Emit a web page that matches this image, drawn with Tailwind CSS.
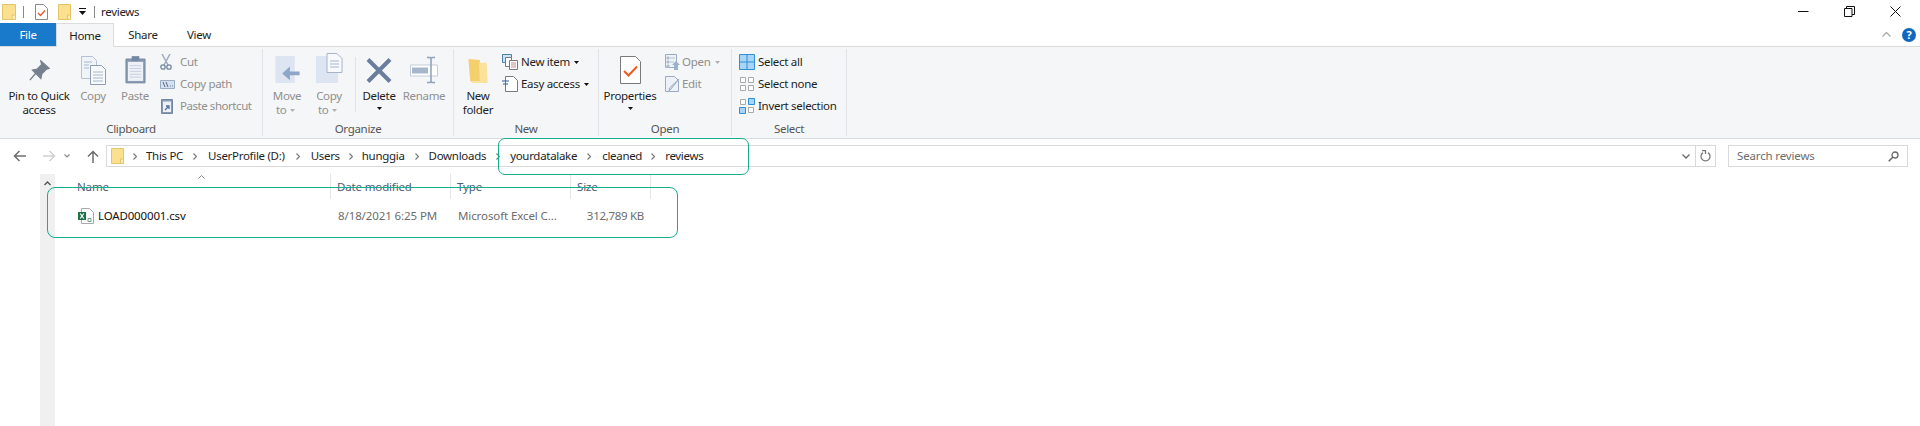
<!DOCTYPE html>
<html lang="en">
<head>
  <meta charset="UTF-8">
  <title>reviews</title>
  <script src="https://cdn.jsdelivr.net/npm/@tailwindcss/browser@4"></script>
</head>
<body class="bg-white">
<div class="relative w-[1920px] h-[426px] overflow-hidden bg-white text-[11.5px] leading-[16px] text-[#1e1e1e] font-['Noto_Sans',sans-serif] tracking-[-0.3px]">

  <!-- title bar -->
  <div class="flex items-center h-[23px]">
    <svg class="ml-[2px] w-[14px] h-[16px]" viewBox="0 0 14 16"><path d="M.5.500h13v15H.5z" fill="#fbe08f" stroke="#e3c468"/><path d="M10 11h3.500v4.500H10z" fill="#fdeeb8" stroke="#e3c468"/></svg>
    <div class="ml-[7px] w-px h-[12px] bg-[#8a8a8a]"></div>
    <svg class="ml-[11px] w-[13px] h-[16px]" viewBox="0 0 13 16"><path d="M.5.500h8l4 4v11H.5z" fill="#fff" stroke="#8a8a8a"/><path d="M3 9l2.500 2.500L10 6.500" fill="none" stroke="#e8562a" stroke-width="1.300"/></svg>
    <svg class="ml-[10px] w-[13px] h-[16px]" viewBox="0 0 13 16"><path d="M.5.500h12v15H.5z" fill="#fbe08f" stroke="#e3c468"/><path d="M9.500 11h3v4.500h-3z" fill="#fdeeb8" stroke="#e3c468"/></svg>
    <svg class="ml-[8px] w-[7px] h-[8px]" viewBox="0 0 7 8"><path d="M0 0h7v1H0zM0 3h7L3.500 7z" fill="#111"/></svg>
    <div class="ml-[8px] w-px h-[12px] bg-[#8a8a8a]"></div>
    <span class="ml-[6px]">reviews</span>
    <div class="ml-auto flex items-center mr-[19px] gap-[35px]">
      <svg class="w-[11px] h-[11px]" viewBox="0 0 11 11"><path d="M0 5.500h10.500" stroke="#111"/></svg>
      <svg class="w-[11px] h-[11px]" viewBox="0 0 11 11"><path d="M.5 2.500h7.500v8H.5zM2.500 2.500v-2h8v8H8" fill="none" stroke="#111"/></svg>
      <svg class="w-[11px] h-[11px]" viewBox="0 0 11 11"><path d="M.5.500l10 10M10.500.500l-10 10" stroke="#111"/></svg>
    </div>
  </div>

  <!-- tabs -->
  <div class="relative flex items-end h-[24px] border-b border-[#dadbdc]">
    <div class="w-[56px] h-[23px] bg-[#1979ca] text-white flex items-center justify-center">File</div>
    <div class="w-[58px] h-[24px] -mb-px bg-[#f5f6f7] border border-b-0 border-[#dadbdc] flex items-center justify-center">Home</div>
    <div class="w-[58px] h-[23px] flex items-center justify-center">Share</div>
    <div class="w-[54px] h-[23px] flex items-center justify-center">View</div>
    <div class="ml-auto flex items-center h-[23px] mr-[4px] gap-[11px]">
      <svg class="w-[9px] h-[5px]" viewBox="0 0 9 5"><path d="M.5 4.500l4-4 4 4" fill="none" stroke="#a8a8a8" stroke-width="1.200"/></svg>
      <div class="w-[14px] h-[14px] rounded-full bg-[#1167bd] text-white text-[11px] leading-[14px] font-bold text-center tracking-normal">?</div>
    </div>
  </div>

  <!-- ribbon -->
  <div class="flex h-[92px] bg-[#f5f6f7] border-b border-[#dadbdc] pt-[2px]">

    <!-- clipboard -->
    <div class="w-[263px] h-[87px] border-r border-[#e1e3e6] flex flex-col">
      <div class="flex h-[69px] leading-[14px]">
        <div class="w-[78px] flex flex-col items-center">
          <svg class="mt-[11px] w-[22px] h-[22px]" viewBox="0 0 24 24"><path d="M14 1l9 8-3 1-5 5-1 5-9-9 5-1 5-5zM8 15l-6 7" fill="#77808f" stroke="#77808f" stroke-width="1.500"/></svg>
          <div class="mt-[7px] text-center">Pin to Quick<br>access</div>
        </div>
        <div class="w-[30px] flex flex-col items-center text-[#8f8f8f]">
          <svg class="mt-[7px] w-[25px] h-[29px]" viewBox="0 0 25 29"><path d="M.5.500h11l4 4v18H.5z" fill="#f0f3f8" stroke="#b6c2d4"/><path d="M9.500 9.500h11l4 4v15h-15z" fill="#f7f9fc" stroke="#8d9db5"/><path d="M3 6h8M3 9h5M3 12h5M12 16h10M12 19h10M12 22h10M12 25h10" stroke="#a9b7cb"/></svg>
          <div class="mt-[4px]">Copy</div>
        </div>
        <div class="w-[32px] ml-[11px] flex flex-col items-center text-[#8f8f8f]">
          <svg class="mt-[6px] w-[21px] h-[29px]" viewBox="0 0 22 30"><path d="M1 4h20v25H1z" fill="#8a9ab2" stroke="#7487a3"/><path d="M3 7h16v20H3z" fill="#edf1f7"/><path d="M7 1h8v5H7z" fill="#7487a3"/><path d="M5 11h12M5 14h12M5 17h12M5 20h12M5 23h12" stroke="#c6d0df"/></svg>
          <div class="mt-[5px]">Paste</div>
        </div>
        <div class="ml-[9px] pt-[5px] flex flex-col text-[#8f8f8f] gap-[6px]">
          <div class="flex items-center h-[16px] gap-[6px]">
            <svg class="w-[12px] h-[16px]" viewBox="0 0 12 16"><path d="M2 0l6 11M10 0L4 11" stroke="#9eacc0" stroke-width="1.500"/><circle cx="3" cy="13" r="2.200" fill="none" stroke="#7487a3" stroke-width="1.300"/><circle cx="9" cy="13" r="2.200" fill="none" stroke="#7487a3" stroke-width="1.300"/></svg>
            <span class="ml-[2px]">Cut</span>
          </div>
          <div class="flex items-center h-[16px] gap-[7px]">
            <svg class="w-[15px] h-[9px] -mr-[2px]" viewBox="0 0 15 9"><path d="M.5.500h14v8H.5z" fill="#d6e0ee" stroke="#9aabc2"/><path d="M3 2l2 5M6 2l2 5M10 6h.8M12 6h.8" stroke="#55688a"/></svg>
            <span>Copy path</span>
          </div>
          <div class="flex items-center h-[16px] gap-[7px]">
            <svg class="w-[12px] h-[16px] ml-[1px]" viewBox="0 0 12 16"><path d="M.5 1.500h11v14H.5z" fill="#8a9ab2" stroke="#7487a3"/><path d="M2 3.500h8V14H2z" fill="#edf1f7"/><path d="M4 12l3-3M5 8h3v3" stroke="#4f6da0" stroke-width="1.300" fill="none"/></svg>
            <span class="tracking-[-0.45px]">Paste shortcut</span>
          </div>
        </div>
      </div>
      <div class="mt-[4px] text-center text-[#555] leading-[14px]">Clipboard</div>
    </div>

    <!-- organize -->
    <div class="w-[191px] h-[87px] border-r border-[#e1e3e6] flex flex-col">
      <div class="flex h-[69px] leading-[14px]">
        <div class="w-[44px] ml-[2px] flex flex-col items-center text-[#8f8f8f]">
          <svg class="mt-[7px] w-[27px] h-[28px]" viewBox="0 0 27 29"><path d="M1 0h20v28H1z" fill="#dce5f1"/><path d="M26 16H16v-5l-8 7 8 7v-5h10z" fill="#8ea6c7"/></svg>
          <div class="mt-[5px]">Move</div>
          <div class="flex items-center self-start ml-[11px] gap-[3px]">to<svg class="w-[5px] h-[3px]" viewBox="0 0 5 3"><path d="M0 0h5L2.500 3z" fill="#b0b0b0"/></svg></div>
        </div>
        <div class="w-[40px] flex flex-col items-center text-[#8f8f8f]">
          <svg class="mt-[4px] w-[27px] h-[31px]" viewBox="0 0 27 31"><path d="M0 3h22v27H0z" fill="#dce5f1"/><path d="M11 .5h10l5 5v14H11z" fill="#f7f9fc" stroke="#a6b5ca"/><path d="M14 8h9M14 11h9M14 14h9" stroke="#a6b5ca"/></svg>
          <div class="mt-[5px]">Copy</div>
          <div class="flex items-center self-start ml-[9px] gap-[3px]">to<svg class="w-[5px] h-[3px]" viewBox="0 0 5 3"><path d="M0 0h5L2.500 3z" fill="#b0b0b0"/></svg></div>
        </div>
        <div class="w-px h-[55px] mt-[8px] ml-[6px] bg-[#e1e3e6]"></div>
        <div class="w-[46px] flex flex-col items-center">
          <svg class="mt-[8px] w-[26px] h-[27px]" viewBox="0 0 26 26"><path d="M2 2l22 22M24 2L2 24" stroke="#6a7d9c" stroke-width="4"/></svg>
          <div class="mt-[5px]">Delete</div>
          <svg class="mt-[4px] w-[5px] h-[3px]" viewBox="0 0 5 3"><path d="M0 0h5L2.500 3z" fill="#111"/></svg>
        </div>
        <div class="w-[44px] flex flex-col items-center text-[#8f8f8f]">
          <svg class="mt-[7px] w-[28px] h-[28px]" viewBox="0 0 28 27"><path d="M.5 8.500h27v11H.5z" fill="#fff" stroke="#c3cddb"/><path d="M2 11h16v6H2z" fill="#a7b6cb"/><path d="M17 1h3l1 1 1-1h3M21 2v23M17 26h3l1-1 1 1h3" fill="none" stroke="#8da0ba" stroke-width="1.500"/></svg>
          <div class="mt-[5px]">Rename</div>
        </div>
      </div>
      <div class="mt-[4px] text-center text-[#555] leading-[14px]">Organize</div>
    </div>

    <!-- new -->
    <div class="w-[145px] h-[87px] border-r border-[#e1e3e6] flex flex-col">
      <div class="flex h-[69px] leading-[14px]">
        <div class="w-[48px] flex flex-col items-center">
          <svg class="mt-[9px] w-[20px] h-[27px]" viewBox="0 0 20 28"><path d="M0 1l12 1v22L2 24z" fill="#f4cf6d"/><path d="M11 5h8l1 21H4l-2-2h10z" fill="#fbe29a"/></svg>
          <div class="mt-[4px] text-center">New<br>folder</div>
        </div>
        <div class="pt-[5px] flex flex-col gap-[6px]">
          <div class="flex items-center h-[16px]">
            <svg class="w-[16px] h-[16px]" viewBox="0 0 16 16"><path d="M.5.500h9v8h-9z" fill="#cfe2f3" stroke="#4a7fa8"/><path d="M3.500 3.500h6v9h-6z" fill="#fff" stroke="#7a7a7a"/><path d="M7.500 6.500h8v9h-8z" fill="#fff" stroke="#7a7a7a"/><path d="M9 9h5M9 11h5M9 13h5" stroke="#c98a8a"/></svg>
            <span class="ml-[3px]">New item</span>
            <svg class="ml-[4px] w-[5px] h-[3px]" viewBox="0 0 5 3"><path d="M0 0h5L2.500 3z" fill="#111"/></svg>
          </div>
          <div class="flex items-center h-[16px]">
            <svg class="w-[16px] h-[16px]" viewBox="0 0 16 16"><path d="M3.500.500h8l4 4v11h-12z" fill="#fff" stroke="#7a7a7a"/><path d="M0 5h7M1 8h5" stroke="#2a5d96" stroke-width="1.200"/></svg>
            <span class="ml-[3px]">Easy access</span>
            <svg class="ml-[4px] w-[5px] h-[3px]" viewBox="0 0 5 3"><path d="M0 0h5L2.500 3z" fill="#111"/></svg>
          </div>
        </div>
      </div>
      <div class="mt-[4px] text-center text-[#555] leading-[14px]">New</div>
    </div>

    <!-- open -->
    <div class="w-[133px] h-[87px] border-r border-[#e1e3e6] flex flex-col">
      <div class="flex h-[69px] leading-[14px]">
        <div class="w-[62px] flex flex-col items-center">
          <svg class="mt-[7px] w-[21px] h-[28px]" viewBox="0 0 21 28"><path d="M.5.500h15l5 5v22H.500z" fill="#fff" stroke="#7a7a7a"/><path d="M4 15l4.500 4.500L17 10.500" fill="none" stroke="#ee5a1c" stroke-width="2"/></svg>
          <div class="mt-[5px]">Properties</div>
          <svg class="mt-[4px] w-[5px] h-[3px]" viewBox="0 0 5 3"><path d="M0 0h5L2.500 3z" fill="#111"/></svg>
        </div>
        <div class="ml-[4px] pt-[5px] flex flex-col gap-[6px] text-[#8f8f8f]">
          <div class="flex items-center h-[16px]">
            <svg class="w-[15px] h-[16px]" viewBox="0 0 15 16"><path d="M.5.500h11v13H.5z" fill="#eef2f7" stroke="#9aabc2"/><path d="M2 3h2v2H2zM2 7h2v2H2zM2 11h2v2H2zM5 4h5M5 8h4" fill="#8ea0ba" stroke="#b7c3d4"/><path d="M11 7l4 4h-2v5h-4v-5H7z" fill="#9cb1cc"/></svg>
            <span class="ml-[2px]">Open</span>
            <svg class="ml-[5px] w-[5px] h-[3px]" viewBox="0 0 5 3"><path d="M0 0h5L2.500 3z" fill="#b0b0b0"/></svg>
          </div>
          <div class="flex items-center h-[16px]">
            <svg class="w-[15px] h-[16px]" viewBox="0 0 15 16"><path d="M.5.500h9l4 4v11H.5z" fill="#eef2f7" stroke="#9aabc2"/><path d="M14 3L6 13l-2 2 .500-3z" fill="#dbe5f1" stroke="#9aabc2"/></svg>
            <span class="ml-[2px]">Edit</span>
          </div>
        </div>
      </div>
      <div class="mt-[4px] text-center text-[#555] leading-[14px]">Open</div>
    </div>

    <!-- select -->
    <div class="w-[115px] h-[87px] border-r border-[#e1e3e6] flex flex-col">
      <div class="flex flex-col h-[69px] pt-[5px] pl-[7px] gap-[6px]">
        <div class="flex items-center h-[16px]">
          <svg class="w-[16px] h-[16px]" viewBox="0 0 16 16"><path d="M.5.500h15v15H.5z" fill="#a8d4f5" stroke="#2f8fd8"/><path d="M8 0v16M0 8h16" stroke="#2f8fd8"/></svg>
          <span class="ml-[3px]">Select all</span>
        </div>
        <div class="flex items-center h-[16px]">
          <svg class="w-[16px] h-[16px]" viewBox="0 0 16 16"><path d="M1.500 1.500h5v5h-5zM9.500 1.500h5v5h-5zM1.500 9.500h5v5h-5zM9.500 9.500h5v5h-5z" fill="#fff" stroke="#aaa"/></svg>
          <span class="ml-[3px]">Select none</span>
        </div>
        <div class="flex items-center h-[16px]">
          <svg class="w-[16px] h-[16px]" viewBox="0 0 16 16"><path d="M9.500.500h6v6h-6zM.5 9.500h6v6h-6z" fill="#a8d4f5" stroke="#2f8fd8"/><path d="M1.500 1.500h5v5h-5zM9.500 9.500h5v5h-5z" fill="#fff" stroke="#aaa"/></svg>
          <span class="ml-[3px]">Invert selection</span>
        </div>
      </div>
      <div class="mt-[4px] text-center text-[#555] leading-[14px]">Select</div>
    </div>
  </div>

  <!-- address bar -->
  <div class="flex items-center h-[34px] mb-px">
    <svg class="ml-[13px] w-[13px] h-[12px]" viewBox="0 0 13 12"><path d="M13 6H2M6.500 1L1.500 6l5 5" fill="none" stroke="#6d6d6d" stroke-width="1.500"/></svg>
    <svg class="ml-[17px] w-[13px] h-[12px]" viewBox="0 0 13 12"><path d="M0 6h11M6.500 1l5 5-5 5" fill="none" stroke="#d0d0d0" stroke-width="1.500"/></svg>
    <svg class="ml-[8px] w-[6px] h-[4px]" viewBox="0 0 6 4"><path d="M.5.500L3 3 5.500.5" fill="none" stroke="#8a8a8a" stroke-width="1.200"/></svg>
    <svg class="ml-[17px] w-[12px] h-[13px]" viewBox="0 0 12 13"><path d="M6 13V2M1 6.500l5-5 5 5" fill="none" stroke="#6d6d6d" stroke-width="1.500"/></svg>
    <div class="ml-[7px] w-[1610px] h-[22px] border border-[#d9d9d9] flex items-center">
      <svg class="ml-[4px] w-[13px] h-[16px]" viewBox="0 0 13 16"><path d="M.5.500h12v15H.5z" fill="#fbe08f" stroke="#e3c468"/><path d="M9.500 11h3v4.500h-3z" fill="#fdeeb8" stroke="#e3c468"/></svg>
      <svg class="ml-[9px] w-[4px] h-[7px]" viewBox="0 0 4 7"><path d="M.5.500l3 3-3 3" fill="none" stroke="#777" stroke-width="1.200"/></svg>
      <span class="ml-[9px]">This PC</span>
      <svg class="ml-[10px] w-[4px] h-[7px]" viewBox="0 0 4 7"><path d="M.5.500l3 3-3 3" fill="none" stroke="#777" stroke-width="1.200"/></svg>
      <span class="ml-[11px]">UserProfile (D:)</span>
      <svg class="ml-[11px] w-[4px] h-[7px]" viewBox="0 0 4 7"><path d="M.5.500l3 3-3 3" fill="none" stroke="#777" stroke-width="1.200"/></svg>
      <span class="ml-[11px]">Users</span>
      <svg class="ml-[9px] w-[4px] h-[7px]" viewBox="0 0 4 7"><path d="M.5.500l3 3-3 3" fill="none" stroke="#777" stroke-width="1.200"/></svg>
      <span class="ml-[9px]">hunggia</span>
      <svg class="ml-[10px] w-[4px] h-[7px]" viewBox="0 0 4 7"><path d="M.5.500l3 3-3 3" fill="none" stroke="#777" stroke-width="1.200"/></svg>
      <span class="ml-[10px]">Downloads</span>
      <svg class="ml-[10px] w-[4px] h-[7px]" viewBox="0 0 4 7"><path d="M.5.500l3 3-3 3" fill="none" stroke="#777" stroke-width="1.200"/></svg>
      <span class="ml-[10px]">yourdatalake</span>
      <svg class="ml-[10px] w-[4px] h-[7px]" viewBox="0 0 4 7"><path d="M.5.500l3 3-3 3" fill="none" stroke="#777" stroke-width="1.200"/></svg>
      <span class="ml-[11px]">cleaned</span>
      <svg class="ml-[9px] w-[4px] h-[7px]" viewBox="0 0 4 7"><path d="M.5.500l3 3-3 3" fill="none" stroke="#777" stroke-width="1.200"/></svg>
      <span class="ml-[10px]">reviews</span>
      <svg class="ml-auto mr-[5px] w-[8px] h-[5px]" viewBox="0 0 8 5"><path d="M.5.500L4 4 7.500.5" fill="none" stroke="#666" stroke-width="1.300"/></svg>
      <div class="w-[20px] h-full border-l border-[#d9d9d9] flex items-center justify-center">
        <svg class="w-[11px] h-[12px]" viewBox="0 0 11 12"><path d="M3 2.600a4.500 4.500 0 1 0 5 0M2 .5h3.500v3.500" fill="none" stroke="#777" stroke-width="1.300"/></svg>
      </div>
    </div>
    <div class="ml-[12px] w-[180px] h-[22px] border border-[#d9d9d9] flex items-center text-[#6d6d6d]">
      <span class="ml-[8px] tracking-[-0.15px]">Search reviews</span>
      <svg class="ml-auto mr-[8px] w-[11px] h-[11px]" viewBox="0 0 11 11"><circle cx="7" cy="4" r="3" fill="none" stroke="#666" stroke-width="1.300"/><path d="M4.800 6.200L.7 10.300" stroke="#666" stroke-width="1.500"/></svg>
    </div>
  </div>

  <!-- file list -->
  <div class="flex h-[252px]">
    <div class="ml-[40px] w-[15px] bg-[#f0f0f0] flex justify-center pt-[7px]">
      <svg class="w-[7px] h-[5px]" viewBox="0 0 7 5"><path d="M.5 4L3.500 1l3 3" fill="none" stroke="#555" stroke-width="1.400"/></svg>
    </div>
    <div class="relative flex-1">
      <svg class="absolute left-[143px] top-[1px] w-[7px] h-[4px]" viewBox="0 0 7 4"><path d="M.5 3.500l3-3 3 3" fill="none" stroke="#888"/></svg>
      <div class="flex h-[25px] text-[#4c607a] tracking-[-0.15px]">
        <div class="w-[276px] pl-[22px] pt-[5px] border-r border-[#e5e5e5]">Name</div>
        <div class="w-[120px] pl-[6px] pt-[5px] border-r border-[#e5e5e5]">Date modified</div>
        <div class="w-[120px] pl-[6px] pt-[5px] border-r border-[#e5e5e5]">Type</div>
        <div class="w-[80px] pl-[6px] pt-[5px] border-r border-[#e5e5e5]">Size</div>
      </div>
      <div class="flex items-center h-[22px] mt-[6px] text-[#6d6d6d]">
        <div class="w-[276px] pl-[23px] flex items-center text-[#111] tracking-[-0.15px]">
          <svg class="w-[16px] h-[16px]" viewBox="0 0 16 16"><path d="M3.500.500h8l4 4v11h-12z" fill="#fff" stroke="#a8a8a8"/><path d="M0 4h8v8H0z" fill="#1e7145"/><path d="M2.200 5.500l3.600 5M5.800 5.500l-3.600 5" stroke="#fff" stroke-width="1.200"/><path d="M10 10.500h3v3h-3z" fill="none" stroke="#6aa184"/></svg>
          <span class="ml-[4px]">LOAD000001.csv</span>
        </div>
        <div class="w-[120px] pl-[7px] tracking-[-0.1px]">8/18/2021 6:25 PM</div>
        <div class="w-[120px] pl-[7px] tracking-[-0.1px]">Microsoft Excel C...</div>
        <div class="w-[80px] pr-[7px] text-right">312,789 KB</div>
      </div>
    </div>
  </div>

  <!-- green annotation boxes -->
  <div class="absolute left-[498px] top-[138px] w-[251px] h-[37px] border border-[#17ae8f] rounded-[7px]"></div>
  <div class="absolute left-[47px] top-[187px] w-[631px] h-[51px] border border-[#17ae8f] rounded-[8px]"></div>
</div>
</body>
</html>
